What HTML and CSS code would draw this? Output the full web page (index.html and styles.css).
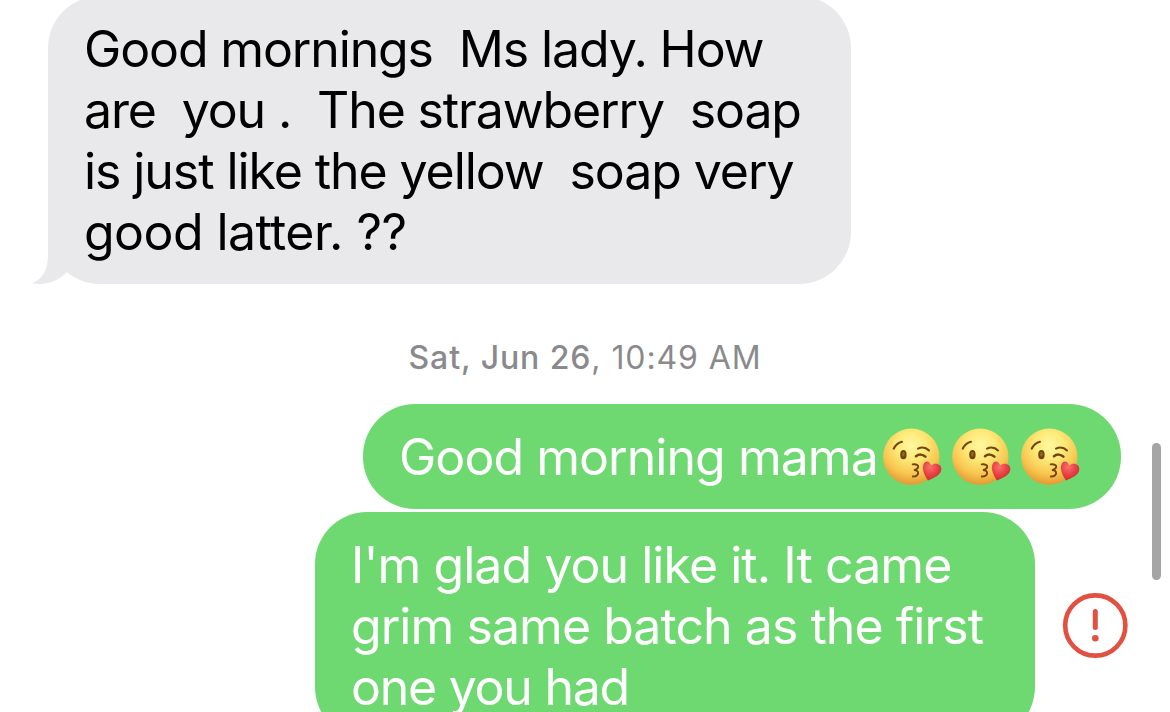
FILE: index.html
```
<!DOCTYPE html>
<html lang="en">
<head>
    <meta charset="UTF-8">
    <meta name="viewport" content="width=device-width, initial-scale=1.0">
    <title>Messages</title>
    <link rel="stylesheet" href="styles.css">
</head>
<body>
    <!-- Kiss emoji, shared by the message below -->
    <svg class="defs" width="0" height="0">
        <defs>
            <radialGradient id="face" cx="0.5" cy="0.3" r="0.72">
                <stop offset="0" stop-color="#fff7a0"/>
                <stop offset="0.35" stop-color="#fdea78"/>
                <stop offset="0.7" stop-color="#f8c750"/>
                <stop offset="1" stop-color="#e2942f"/>
            </radialGradient>
            <radialGradient id="heart" cx="0.4" cy="0.3" r="0.7">
                <stop offset="0" stop-color="#f8706c"/>
                <stop offset="0.55" stop-color="#e94345"/>
                <stop offset="1" stop-color="#cf2c33"/>
            </radialGradient>
            <symbol id="kiss" viewBox="0 0 69 70">
                <circle cx="31.3" cy="36.7" r="28.2" fill="url(#face)"/>
                <g fill="none" stroke="#70450f" stroke-width="2" stroke-linecap="round">
                    <path d="M13.7 28.7C15.5 25 18.5 22.5 22 21.7"/>
                    <path d="M38 28.6c3.8-1.9 8-1.2 11 1.9"/>
                    <path d="M36 36.2c3-2.2 6.8-2 9.4.4" stroke-width="2.6"/>
                    <path d="M32.7 44.4c3.5-.4 6 .5 5.500 2.600-.4 1.900-2.100 2.600-4.200 3.100 2.700.1 4.400 1.200 4.100 3.200-.4 2.300-2.700 3.200-5.300 3.200" stroke-width="1.900"/>
                </g>
                <ellipse cx="23.4" cy="34.7" rx="3.2" ry="4.6" fill="#70450f"/>
                <ellipse cx="23.4" cy="34.2" rx="1.2" ry="2.4" fill="#966a24"/>
                <path d="M48 60.400C45.600 57 42.700 52 42.900 47c.2-6.600 6.300-7.700 8.300-1.500 4.200-3.600 10.600-1.200 10.100 3.900-.5 5.600-7.300 8.400-13.300 11z" fill="url(#heart)"/>
            </symbol>
        </defs>
    </svg>

    <main class="chat">
        <div class="row received">
            <div class="bubble gray">
                <svg class="tail" width="36" height="56" viewBox="0 0 36 56">
                    <path d="M16 0V27C16 41 11 51 0 55.3C12 57.5 26 54 35 44L24 10V0z" fill="#e9e9eb"/>
                </svg>
                <span class="line l1">Good mornings  Ms lady. How</span>
                <span class="line l2">are  you .  The strawberry  soap</span>
                <span class="line l3">is just like the yellow  soap very</span>
                <span class="line l4">good latter. ??</span>
            </div>
        </div>

        <div class="timestamp"><b>Sat, Jun 26</b>, 10:49 AM</div>

        <div class="row sent">
            <div class="bubble green short">
                <span class="line l5">Good morning mama</span>
                <span class="emojis">
                    <svg class="emoji"><use href="#kiss"/></svg>
                    <svg class="emoji"><use href="#kiss"/></svg>
                    <svg class="emoji"><use href="#kiss"/></svg>
                </span>
            </div>
        </div>

        <div class="row sent failed">
            <div class="bubble green long">
                <span class="line l6">I'm glad you like it. It came</span>
                <span class="line l7">grim same batch as the first</span>
                <span class="line l8">one you had</span>
            </div>
            <svg class="alert" width="66" height="66" viewBox="0 0 66 66">
                <circle cx="33.3" cy="32.5" r="30.1" fill="none" stroke="#e25041" stroke-width="4.6"/>
                <path d="M33.3 18.500V34.500" stroke="#e25041" stroke-width="5" stroke-linecap="round"/>
                <circle cx="33.3" cy="45.2" r="3.3" fill="#e25041"/>
            </svg>
        </div>
    </main>

    <div class="scrollbar"></div>
</body>
</html>
```
FILE: styles.css
```
body {
    margin: 0;
    height: 712px;
    overflow: hidden;
    background-color: #fff;
    font-family: Inter, "Liberation Sans", sans-serif;
}
.defs {
    position: absolute;
}
.chat {
    display: flow-root;
    height: 712px;
    overflow: hidden;
}
.row {
    display: flex;
}
.received {
    margin-top: -4px;
    padding-left: 48px;
}
.sent {
    justify-content: flex-end;
    padding-right: 49px;
}
.bubble {
    position: relative;
    box-sizing: border-box;
    padding: 23px 34px 21px 36px;
    border-radius: 52px;
    font-size: 50px;
    line-height: 61px;
}
.gray {
    width: 803px;
    background-color: #e9e9eb;
    color: #000;
}
.green {
    background-color: #6fd971;
    color: #fff;
}
.line {
    display: block;
    white-space: pre;
}
/* Small hook in the lower left corner of a received bubble */
.tail {
    position: absolute;
    left: -16px;
    bottom: 0;
}
.timestamp {
    height: 120px;
    line-height: 147px;
    text-align: center;
    font-size: 32px;
    color: #8a8a8d;
    letter-spacing: 0.9px;
}
.timestamp b {
    font-weight: 500;
}
.short {
    display: flex;
    justify-content: space-between;
    width: 758px;
}
.emojis {
    display: flex;
    height: 61px;
    margin-top: -7px;
}
.emoji {
    width: 69px;
    height: 70px;
}
.failed {
    align-items: center;
    gap: 27px;
    margin-top: 3px;
    padding-right: 42px;
}
.long {
    width: 720px;
}
.scrollbar {
    position: absolute;
    top: 443px;
    right: 9px;
    width: 9px;
    height: 137px;
    border-radius: 5px;
    background-color: #a5a5a5;
}
/* Tracking per line */
.l1, .l2 {
    letter-spacing: -1.13px;
}
.l3 {
    letter-spacing: -1.08px;
}
.l4 {
    letter-spacing: -0.57px;
}
.l5, .l6, .l7 {
    letter-spacing: -0.95px;
}
.l8 {
    letter-spacing: -1.25px;
}
```
